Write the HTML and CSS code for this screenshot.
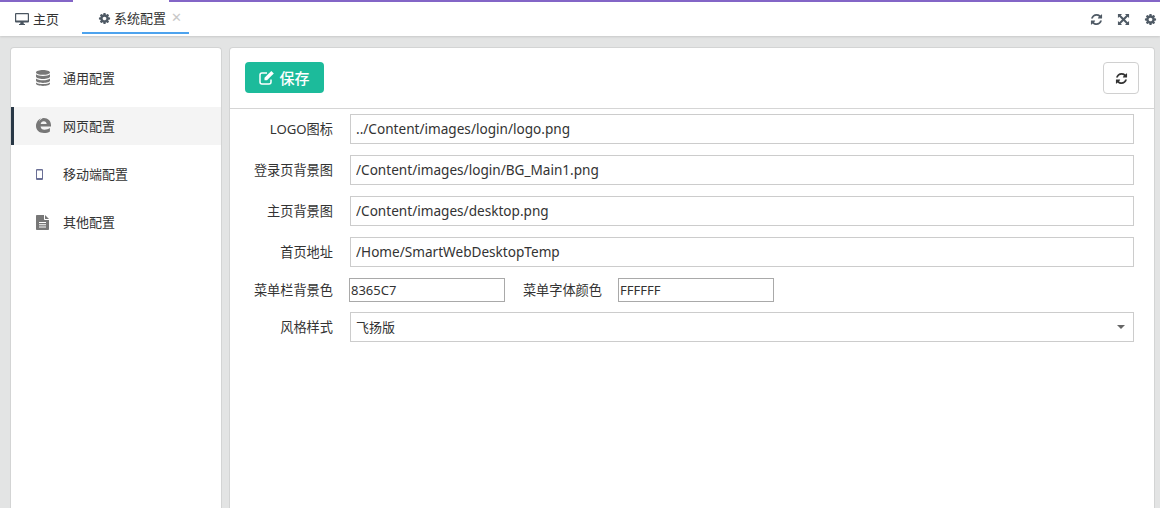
FILE: index.html
```html
<!DOCTYPE html>
<html lang="zh">
<head>
<meta charset="utf-8">
<title>系统配置</title>
<link rel="stylesheet" href="styles.css">
</head>
<body>
<svg class="defs" width="0" height="0" aria-hidden="true">
  <symbol id="i-refresh" viewBox="0 0 1792 1792"><path d="M1639 1056q0 5-1 7-64 268-268 434.5t-478 166.5q-146 0-282.5-55t-243.5-157l-129 129q-19 19-45 19t-45-19-19-45v-448q0-26 19-45t45-19h448q26 0 45 19t19 45-19 45l-137 137q71 66 161 102t187 36q134 0 250-65t186-179q11-17 53-117 8-23 30-23h192q13 0 22.5 9.5t9.5 22.5zm25-800v448q0 26-19 45t-45 19h-448q-26 0-45-19t-19-45 19-45l138-138q-148-137-349-137-134 0-250 65t-186 179q-11 17-53 117-8 23-30 23h-199q-13 0-22.5-9.5t-9.5-22.5v-7q65-268 270-434.5t480-166.5q146 0 284 55.5t245 156.5l130-129q19-19 45-19t45 19 19 45z"/></symbol>
  <symbol id="i-cog" viewBox="0 0 1792 1792"><path d="M1152 896q0-106-75-181t-181-75-181 75-75 181 75 181 181 75 181-75 75-181zm512-109v222q0 12-8 23t-20 13l-185 28q-19 54-39 91 35 50 107 138 10 12 10 25t-9 23q-27 37-99 108t-94 71q-12 0-26-9l-138-108q-44 23-91 38-16 136-29 186-7 28-36 28h-222q-14 0-24.5-8.5t-11.5-21.5l-28-184q-49-16-90-37l-141 107q-10 9-25 9-14 0-25-11-126-114-165-168-7-10-7-23 0-12 8-23 15-21 51-66.5t54-70.5q-27-50-41-99l-183-27q-13-2-21-12.5t-8-23.5v-222q0-12 8-23t19-13l186-28q14-46 39-92-40-57-107-138-10-12-10-24 0-10 9-23 26-36 98.5-107.5t94.5-71.5q13 0 26 10l138 107q44-23 91-38 16-136 29-186 7-28 36-28h222q14 0 24.5 8.5t11.5 21.5l28 184q49 16 90 37l142-107q9-9 24-9 13 0 25 10 129 119 165 170 7 8 7 22 0 12-8 23-15 21-51 66.5t-54 70.5q26 50 41 98l183 28q13 2 21 12.5t8 23.5z"/></symbol>
</svg>

<header class="tabbar">
  <nav class="tabs">
    <div class="tab tab-home">
      <svg class="tab-icon" viewBox="0 0 14 12"><path fill="#4a5560" fill-rule="evenodd" d="M1 0h12a1 1 0 0 1 1 1v7.500a1 1 0 0 1-1 1H8.500l.4 1.500H10v1H4v-1h1.100l.4-1.500H1a1 1 0 0 1-1-1V1a1 1 0 0 1 1-1zm.2 1.200v6.300h11.600V1.200z"/></svg>
      <span>主页</span>
    </div>
    <div class="tab tab-active">
      <span class="tab-inner">
        <svg class="tab-icon-cog"><use href="#i-cog"/></svg>
        <span>系统配置</span>
      </span>
      <span class="tab-close">✕</span>
    </div>
  </nav>
  <div class="tools">
    <svg class="tool"><use href="#i-refresh"/></svg>
    <svg class="tool tool-expand" viewBox="0 0 14 14"><path d="M1 1h4.500L4 2.500 7 5.400 10 2.500 8.500 1H13v4.500L11.500 4 8.600 7l2.900 3L13 8.500V13H8.500l1.500-1.500L7 8.600 4 11.500 5.500 13H1V8.500L2.500 10 5.400 7 2.500 4 1 5.500z"/></svg>
    <svg class="tool"><use href="#i-cog"/></svg>
  </div>
</header>

<main class="workspace">
  <aside class="card sidebar">
    <a class="menu-item">
      <span class="menu-icon"><svg width="14" height="16" viewBox="0 0 14 16"><path fill="#777" d="M7 0c3.900 0 7 1 7 2.400S10.900 4.800 7 4.800 0 3.800 0 2.400 3.100 0 7 0zM0 4.300C1.200 5.500 4 6 7 6s5.800-.5 7-1.700v2.200C14 7.900 10.900 9 7 9S0 7.900 0 6.500zm0 4.100C1.200 9.600 4 10.200 7 10.200s5.800-.6 7-1.800v2.200c0 1.400-3.100 2.400-7 2.400s-7-1-7-2.400zm0 4C1.200 13.600 4 14.100 7 14.100s5.800-.5 7-1.700v1.200C14 15 10.900 16 7 16s-7-1-7-2.400z"/></svg></span>
      <span>通用配置</span>
    </a>
    <a class="menu-item menu-active">
      <span class="menu-icon"><svg width="15" height="15" viewBox="0 0 15 15"><path fill="#777" d="M7.800 0C11.900 0 15 2.900 15 7.200v1.300H4.600c.1 2 1.700 3.300 3.900 3.300 2 0 3.900-.6 5.400-1.700v3.300C12.400 14.400 10.400 15 8 15 3.200 15 0 12.200 0 8 0 4.800 2 1.400 5.300.3 3.900 1.300 3.200 2.600 3 3.600 4.200 1.900 5.900 0 7.800 0zm-3.100 6h6c-.1-1.700-1.200-2.800-2.900-2.800-1.700 0-2.900 1.100-3.100 2.800z"/></svg></span>
      <span>网页配置</span>
    </a>
    <a class="menu-item">
      <span class="menu-icon"><svg width="7" height="11" viewBox="0 0 7 11"><path fill="#6a6f96" fill-rule="evenodd" d="M1 0h5a1 1 0 0 1 1 1v9a1 1 0 0 1-1 1H1a1 1 0 0 1-1-1V1a1 1 0 0 1 1-1zm0 1.500v7.500h5V1.500z"/></svg></span>
      <span>移动端配置</span>
    </a>
    <a class="menu-item">
      <span class="menu-icon"><svg width="13" height="15" viewBox="0 0 13 15"><path fill="#777" fill-rule="evenodd" d="M0 .8A.8.800 0 0 1 .8 0H8v4.200c0 .5.300.8.800.8H13v9.200a.8.800 0 0 1-.8.800H.8a.8.800 0 0 1-.8-.8zM9 0l4 4H9zM3 7v1h7V7zm0 2.200v1h7v-1zm0 2.200v1h7v-1z"/></svg></span>
      <span>其他配置</span>
    </a>
  </aside>

  <section class="card content">
    <div class="toolbar">
      <button class="btn-save" type="button">
        <svg width="15" height="14" viewBox="0 0 15 14"><path fill="none" stroke="#fff" stroke-width="1.500" d="M12 8.500V11a2 2 0 0 1-2 2H3a2 2 0 0 1-2-2V4a2 2 0 0 1 2-2h5"/><path fill="#fff" d="M12.300 0l2.500 2.500-6.800 6.800H5.500V6.800z"/></svg>
        <span>保存</span>
      </button>
      <button class="btn-refresh" type="button"><svg><use href="#i-refresh"/></svg></button>
    </div>
    <form class="form">
      <div class="row">
        <label class="label">LOGO图标</label>
        <input class="field" value="../Content/images/login/logo.png">
      </div>
      <div class="row">
        <label class="label">登录页背景图</label>
        <input class="field" value="/Content/images/login/BG_Main1.png">
      </div>
      <div class="row">
        <label class="label">主页背景图</label>
        <input class="field" value="/Content/images/desktop.png">
      </div>
      <div class="row">
        <label class="label">首页地址</label>
        <input class="field" value="/Home/SmartWebDesktopTemp">
      </div>
      <div class="row row-small">
        <label class="label">菜单栏背景色</label>
        <input class="color" value="8365C7">
        <label class="label-inline">菜单字体颜色</label>
        <input class="color" value="FFFFFF">
      </div>
      <div class="row">
        <label class="label">风格样式</label>
        <div class="field select"><span>飞扬版</span><i class="caret"></i></div>
      </div>
    </form>
  </section>
</main>
</body>
</html>
```
FILE: styles.css
```css
* { box-sizing: border-box; }
html, body { margin: 0; height: 100%; overflow: hidden; }
body {
  background: #e3e4e4;
  color: #333;
  font: 13px/18px "Noto Sans", "Noto Sans CJK SC", sans-serif;
  display: flex;
  flex-direction: column;
  height: 508px;
}
.defs { position: absolute; }

.tabbar {
  height: 36px;
  flex: none;
  display: flex;
  justify-content: space-between;
  background: linear-gradient(#8365c7 2px, #fff 2px);
  box-shadow: 0 1px 2px rgba(0, 0, 0, .12);
}
.tabs { display: flex; }
.tab { display: flex; align-items: center; }
.tab-home { width: 73px; padding: 2px 0 0 15px; gap: 4px; }
.tab-icon { width: 14px; height: 12px; }
.tab-active {
  width: 96px;
  background: #fff;
  align-self: stretch;
  position: relative;
}
.tab-inner {
  display: flex;
  align-items: center;
  gap: 3px;
  height: 34px;
  padding: 4px 0 0 16px;
  width: 107px;
  border-bottom: 2px solid #4da3ee;
  position: absolute;
  left: 9px;
  top: 0;
}
.tab-icon-cog { width: 13px; height: 13px; fill: #4f5a65; }
.tab-close {
  position: absolute;
  left: 98px;
  top: 8px;
  font-size: 13px;
  color: #c8c8c8;
}
.tools { display: flex; align-items: center; gap: 14px; padding: 2px 3px 0 0; }
.tool { width: 13px; height: 13px; fill: #4f5a65; }

.workspace {
  flex: 1;
  display: flex;
  gap: 7px;
  padding: 11px 5px 0 10px;
  min-height: 0;
}
.card {
  background: #fff;
  border: 1px solid #d3d4d4;
  border-bottom: 0;
  border-radius: 4px 4px 0 0;
}
.sidebar {
  width: 212px;
  flex: none;
  padding-top: 11px;
}
.menu-item {
  display: flex;
  align-items: center;
  height: 38px;
  margin-bottom: 10.330px;
  padding: 0 0 1px 25px;
  color: #333;
}
.menu-active { background: #f4f4f4; box-shadow: inset 3px 0 0 #293846; }
.menu-icon { width: 27px; display: flex; flex: none; }

.content { flex: 1; min-width: 0; }
.toolbar {
  height: 61px;
  padding: 14px 15px 0 15px;
  display: flex;
  justify-content: space-between;
  align-items: flex-start;
  border-bottom: 1px solid #d5d5d5;
}
.btn-save {
  width: 79px;
  height: 31px;
  border: 0;
  border-radius: 4px;
  background: #1cbb9b;
  color: #fff;
  font: 500 15px "Noto Sans", "Noto Sans CJK SC", sans-serif;
  display: flex;
  align-items: center;
  justify-content: center;
  gap: 5px;
  padding: 0;
}
.btn-refresh {
  width: 36px;
  height: 32px;
  border: 1px solid #d0d0d0;
  border-radius: 4px;
  background: #fff;
  display: flex;
  align-items: center;
  justify-content: center;
  padding: 0;
}
.btn-refresh svg { width: 13px; height: 13px; fill: #333; }

.form { padding: 5px 20px 0 0; display: flex; flex-direction: column; gap: 11px; }
.row { display: flex; align-items: center; }
.row-small { margin-bottom: -1px; }
.label { width: 103px; text-align: right; margin-right: 17px; flex: none; font-size: 13.200px; padding-bottom: 1px; }
.row-small .label { margin-right: 16px; }
.field {
  flex: 1;
  height: 30px;
  border: 1px solid #ccc;
  background: #fff;
  color: #333;
  padding: 0 5px 2px;
  font: 13.600px/18px "Noto Sans", "Noto Sans CJK SC", sans-serif;
  outline: 0;
  min-width: 0;
}
.color {
  width: 156px;
  height: 24px;
  border: 1px solid #a9a9a9;
  background: #fff;
  color: #333;
  padding: 0 1px;
  font: 13px/18px "Noto Sans", "Noto Sans CJK SC", sans-serif;
  outline: 0;
}
.label-inline { width: 97px; text-align: right; margin-right: 16px; flex: none; font-size: 13.200px; padding-bottom: 1px; }
.select { display: flex; align-items: center; justify-content: space-between; font-size: 13px; padding-bottom: 0; }
.caret {
  width: 0;
  height: 0;
  border: 4.500px solid transparent;
  border-top-color: #666;
  border-bottom-width: 0;
  margin-right: 3px;
}
```
